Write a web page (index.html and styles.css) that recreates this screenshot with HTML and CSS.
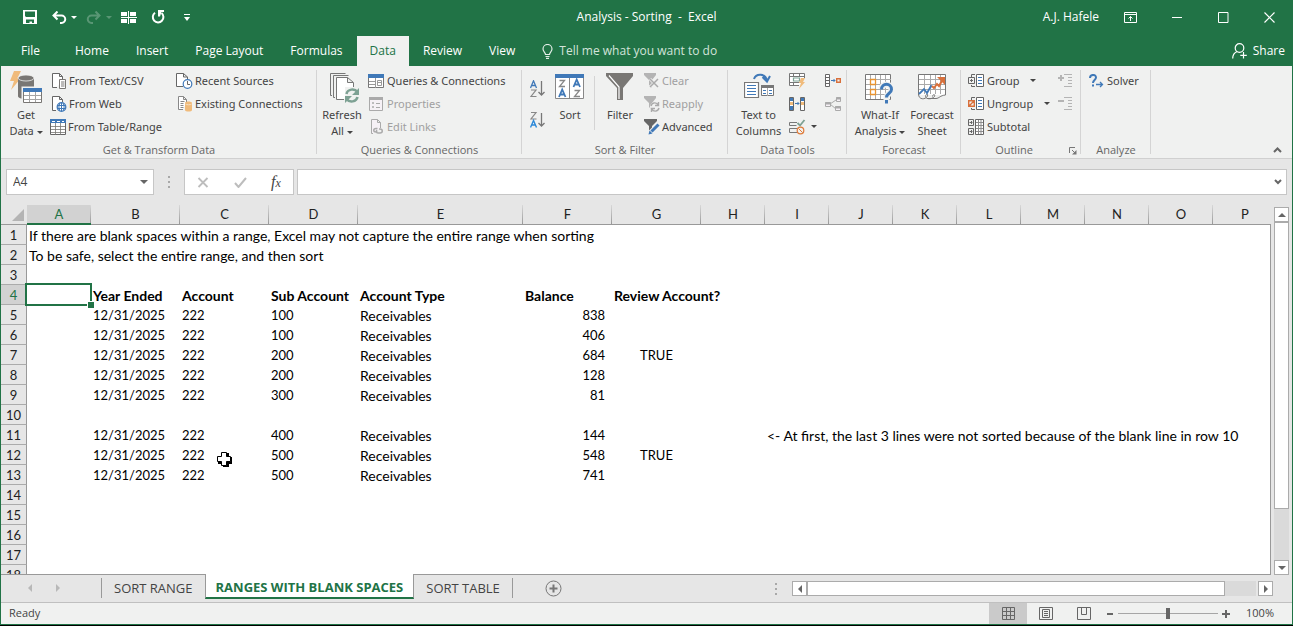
FILE: index.html
```html
<!DOCTYPE html>
<html lang="en">
<head>
<meta charset="utf-8">
<title>Analysis - Sorting - Excel</title>
<link rel="stylesheet" href="styles.css">
</head>
<body>
<div class="app">
  <header class="titlebar">
    <div class="quick">
      <button aria-label="Save"><svg width="14" height="14" viewBox="0 0 14 14"><path fill="#fff" fill-rule="evenodd" d="M0 0h14v14H0zM2 1.500h10V7H3L2 6zM3 9.500h8V13H9v-1.500H6.500V13H3z"/></svg></button>
      <button class="undo" aria-label="Undo"><svg width="15" height="13" viewBox="0 0 15 13"><path d="M5.500.5 1.500 4.500l4 4M2 4.500h7.500a3.500 3.500 0 0 1 0 7.500H8" fill="none" stroke="#fff" stroke-width="2"/></svg><i class="arrow"></i></button>
      <button class="redo" aria-label="Redo"><svg width="15" height="13" viewBox="0 0 15 13"><path d="m9.500.5 4 4-4 4M13 4.500H5.500a3.500 3.500 0 0 0 0 7.500H7" fill="none" stroke="#fff" stroke-width="2"/></svg><i class="arrow"></i></button>
      <button class="freeze" aria-label="Freeze panes"><svg width="16" height="13" viewBox="0 0 16 13"><path fill="#fff" d="M0 1h6v4H0zM9 1h6v4H9zM0 8h6v4H0zM9 8h6v4H9zM7 0h1v13H7zM0 6h16v1H0z"/></svg></button>
      <button class="repeat" aria-label="Repeat"><svg width="15" height="14" viewBox="0 0 15 14"><path d="M4 2.800A5.300 5.300 0 1 0 10.500 3" fill="none" stroke="#fff" stroke-width="2"/><path fill="#fff" d="M7 0h6v2h-2.500L9 6.500H7z"/></svg></button>
      <button class="custom" aria-label="Customize toolbar"><svg width="6" height="7" viewBox="0 0 6 7"><path fill="#fff" d="M0 0h6v1H0zM0 3h6L3 7z"/></svg></button>
    </div>
    <h1 class="title">Analysis - Sorting&nbsp; -&nbsp; Excel</h1>
    <div class="window">
      <span class="user">A.J. Hafele</span>
      <button aria-label="Ribbon display options"><svg width="13" height="11" viewBox="0 0 13 11" fill="none" stroke="#fff"><path d="M.5.500h12v10H.5zM.5 2.500h12M6.500 9V4.500M4.500 6.500l2-2 2 2"/></svg></button>
      <button aria-label="Minimize"><svg width="11" height="11" viewBox="0 0 11 11"><path d="M0 5.500h10" stroke="#fff"/></svg></button>
      <button aria-label="Maximize"><svg width="11" height="11" viewBox="0 0 11 11"><path d="M.5.500h9.500v10H.5z" fill="none" stroke="#fff"/></svg></button>
      <button aria-label="Close"><svg width="11" height="11" viewBox="0 0 11 11"><path d="m.5.500 10 10m0-10-10 10" stroke="#fff" stroke-width="1.200"/></svg></button>
    </div>
  </header>

  <nav class="tabs">
    <button class="file">File</button>
    <button>Home</button>
    <button>Insert</button>
    <button>Page Layout</button>
    <button>Formulas</button>
    <button class="current">Data</button>
    <button>Review</button>
    <button>View</button>
    <button class="tell"><svg width="11" height="15" viewBox="0 0 11 15" fill="none" stroke="#e4efe8" stroke-width="1.200"><path d="M3.500 10.500C3.500 8.500 1 7.500 1 5a4.500 4.500 0 0 1 9 0c0 2.500-2.500 3.500-2.500 5.500zM3.500 12.500h4M4 14.300h3"/></svg>Tell me what you want to do</button>
    <button class="share"><svg width="15" height="16" viewBox="0 0 15 16" fill="none" stroke="#fff" stroke-width="1.200"><circle cx="7.500" cy="5" r="4.300"/><path d="M.7 15.500c0-4 2-6 4.500-7M11.500 9v6.500M8.300 12.300h6.500"/></svg>Share</button>
  </nav>

  <section class="ribbon">
    <div class="group get">
      <div class="tools">
        <button class="big"><svg width="32" height="34" viewBox="0 0 32 34"><path fill="#f0bb7b" d="M4 1h7L7.500 8H11L1 20l3-9H0z"/><path fill="#797774" d="M8 8v18c0 2 3 3 8 3s8-1 8-3V8z"/><ellipse cx="16" cy="8" rx="8" ry="3" fill="#797774" stroke="#f0f1f0" stroke-width=".8"/><path fill="#f0f1f0" d="M11.500 16.500H32V34H11.500z"/><path fill="#fff" stroke="#797774" d="M13.500 18.500h18v14h-18z"/><path fill="#4079b8" d="M13 18h19v4H13z"/><path stroke="#a4a4a4" d="M14 25.500h17M14 29.500h17M19.500 22v10M25.500 22v10"/></svg><span>Get<br>Data <i class="arrow"></i></span></button>
        <div class="stack">
          <button><svg width="16" height="16" viewBox="0 0 16 16"><path fill="#fff" stroke="#666" d="M6 14.500H1.500v-14h7l3 3V6M8.500.500v3h3"/><path fill="#fff" stroke="#797774" d="M8.500 6.500h6v9h-6z"/><path stroke="#797774" d="M10 9h3.500M10 11h3.500M10 13h3.500"/></svg>From Text/CSV</button>
          <button><svg width="16" height="16" viewBox="0 0 16 16"><path fill="#fff" stroke="#666" d="M5 14.500H1.500v-14h7l3 3V6M8.500.500v3h3"/><circle cx="10.500" cy="11" r="4.300" fill="#fff" stroke="#4079b8" stroke-width="1.300"/><path fill="none" stroke="#4079b8" d="M6 9.500h9M6 12.500h9M10.500 7v8M9 7c-1.500 3-1.500 5 0 8M12 7c1.500 3 1.500 5 0 8"/></svg>From Web</button>
          <button class="outdent"><svg width="16" height="16" viewBox="0 0 16 16"><path fill="#fff" stroke="#666" d="M.5.500h15v15H.5z"/><path fill="#4079b8" d="M0 0h16v4H0z"/><path stroke="#fff" d="M2 2.500h3M7 2.500h3M12 2.500h2"/><path stroke="#797774" stroke-width=".8" d="M1 7.500h14M1 10.500h14M1 13.500h14M5.500 4v12M10.500 4v12"/></svg>From Table/Range</button>
        </div>
        <div class="stack">
          <button><svg width="17" height="16" viewBox="0 0 17 16"><path fill="#fff" stroke="#666" d="M7 13.500H.5V.500h7l4 3.500v3M7.500.500V4h4"/><circle cx="11.500" cy="11" r="4.300" fill="#fff" stroke="#4079b8" stroke-width="1.200"/><path fill="none" stroke="#666" d="M11.500 8v3.500H14"/></svg>Recent Sources</button>
          <button><svg width="17" height="16" viewBox="0 0 17 16"><path fill="#fff" stroke="#888" d="M7 13.500H2.500V.500h5l3 3V6M7.500.500v3h3M4.500 5.500h4M4.500 7.500h3M4.500 9.500h3M4.500 11.500h3"/><path fill="#f0bb7b" d="M9 7c0-2 7-2 7 0v7c0 2-7 2-7 0z"/><path fill="none" stroke="#f7dfc0" d="M9.500 8c1 1 5 1 6 0"/></svg>Existing Connections</button>
        </div>
      </div>
      <h2>Get &amp; Transform Data</h2>
    </div>

    <div class="group queries">
      <div class="tools">
        <button class="big"><svg width="32" height="34" viewBox="0 0 32 34" fill="none" stroke="#777"><path d="M4 25.500H2.500v-22h15M7 27.500H5.500v-22h15"/><path fill="#fff" d="M16 29.500H8.500v-22h11l6 5V18M19.500 7.500v5h5.500"/><path fill="#f0f1f0" stroke="none" d="M17 17h15v16H17z"/><path stroke="#7da193" stroke-width="2.500" d="M18.500 24c1-5 8-6 11-2M29.500 27c-1 5-8 6-11 2"/><path fill="#7da193" stroke="none" d="M31 18v7h-7zM17 33v-7h7z"/></svg><span>Refresh<br>All <i class="arrow"></i></span></button>
        <div class="stack">
          <button><svg width="16" height="16" viewBox="0 0 16 16"><path fill="#fff" stroke="#777" d="M.5 1.500h15v13H.5z"/><path fill="#4079b8" d="M0 1h16v4H0z"/><path stroke="#999" d="M1 8.500h6M1 11.500h6M7.500 5v10M9.500 7.500h4v5h-4zM10 9.500h3" fill="none"/></svg>Queries &amp; Connections</button>
          <button disabled><svg width="16" height="16" viewBox="0 0 16 16"><path fill="#f6f1f6" stroke="#aaa" d="M1.500 1.500h13v13h-13z"/><path fill="#aaa" d="M1 1h14v3H1zM8 7h4v1H8zM8 11h4v1H8z"/><path fill="none" stroke="#aaa" d="M4.500 6.500h1v1h-1zM4.500 10.500h1v1h-1z"/></svg>Properties</button>
          <button disabled><svg width="16" height="16" viewBox="0 0 16 16" fill="none" stroke="#aaa"><path fill="#f6f1f6" d="M5 14.500H3.500v-14h6l3 3V9M9.500.500v3h3"/><path stroke-width="1.500" d="M9.500 13H8c-3 0-3-3.500 0-3.500h1.500M11 10h1c3 0 3 4 0 4h-2c-2 0-2-2-1-3"/></svg>Edit Links</button>
        </div>
      </div>
      <h2>Queries &amp; Connections</h2>
    </div>

    <div class="group sort">
      <div class="tools">
        <div class="stack azs">
          <button aria-label="Sort A to Z"><svg width="16" height="18" viewBox="0 0 16 18" fill="none"><path stroke="#4079b8" stroke-width="1.300" d="M.5 8 3.500.800 6.500 8M1.500 5.500h4"/><path stroke="#888" stroke-width="1.200" d="M1 10h5L1 16.500h5.500"/><path stroke="#777" stroke-width="1.300" d="M11.500 1v13M8.500 12l3 3 3-3"/></svg></button>
          <button aria-label="Sort Z to A"><svg width="16" height="18" viewBox="0 0 16 18" fill="none"><path stroke="#888" stroke-width="1.200" d="M1 1.500h5L1 8h5.500"/><path stroke="#2b88d8" stroke-width="1.400" d="m.5 16.500 3-7 3 7M1.500 14h4"/><path stroke="#777" stroke-width="1.300" d="M11.500 2v13M8.500 12l3 3 3-3"/></svg></button>
        </div>
        <button class="big"><svg width="30" height="34" viewBox="0 0 30 34" fill="none"><path fill="#fff" stroke="#888" d="M.5 4.500h28v24H.5zM14.500 8v20"/><path fill="#4079b8" d="M0 4h29v4H0z"/><path stroke="#888" stroke-width="1.300" d="M4.500 10.500h5l-5 6h5.500M19.500 20.500h5l-5 6H25"/><path stroke="#4079b8" stroke-width="1.800" d="m4 27 3.200-7.500L10.500 27M5.500 24.500h4M18.500 17l3.200-7.500L25 17M20 14.500h4"/></svg><span>Sort</span></button>
        <i class="rule"></i>
        <button class="big filter"><svg width="28" height="34" viewBox="0 0 28 34"><path fill="#797774" d="M0 3h27v3L17 18v12h-6V18L0 6z"/><path d="m3 5.500 10 11.500v12" fill="none" stroke="#fff" stroke-width="1.200"/></svg><span>Filter</span></button>
        <div class="stack">
          <button disabled><svg width="16" height="16" viewBox="0 0 16 16"><path fill="#b4b4b4" d="M0 0h12v2L8 7v8l-3-3V7L0 2z"/><path d="m6 6 8 8m0-8-8 8" stroke="#f0f1f0" stroke-width="3"/><path d="m6 6 8 8m0-8-8 8" stroke="#aaa" stroke-width="1.500"/></svg>Clear</button>
          <button disabled><svg width="16" height="16" viewBox="0 0 16 16"><path fill="#b4b4b4" d="M0 0h12v2L8 7v7l-3-3V7L0 2z"/><circle cx="11" cy="11" r="5" fill="#f0f1f0"/><path d="M7 10c1-4 6-4 7-1M15 12c-1 4-6 4-7 1M14.500 6v3.500H11M7.500 16v-3.500H11" fill="none" stroke="#aaa" stroke-width="1.400"/></svg>Reapply</button>
          <button><svg width="16" height="16" viewBox="0 0 16 16"><path fill="#666" d="M0 0h13v2L8 7v7l-3-3V7L0 2z"/><path d="m6 14 8-8" stroke="#f0f1f0" stroke-width="5"/><path d="m7.500 12.500 7-7" stroke="#4079b8" stroke-width="3"/><path fill="#4079b8" d="m4.500 15.500 1-4 3 3z"/></svg>Advanced</button>
        </div>
      </div>
      <h2>Sort &amp; Filter</h2>
    </div>

    <div class="group data">
      <div class="tools">
        <button class="big"><svg width="30" height="34" viewBox="0 0 30 34" fill="none"><path fill="#fff" stroke="#777" stroke-width="1.200" d="M.5 12.500h14v15H.5z"/><path stroke="#4079b8" d="M3 15.500h9M3 18.500h9M3 21.500h9M3 24.500h9"/><path fill="#fff" stroke="#777" d="M17.500 15.500h12v10h-12z"/><path fill="#777" d="M17 15h13v3H17z"/><path stroke="#4079b8" d="M19 20.500h3M25 20.500h3M19 23.500h3M25 23.500h3"/><path stroke="#aaa" d="M23.500 18v8"/><path stroke="#4079b8" stroke-width="2" d="M10 9c2-6 12-6 13 2M18.500 7l4.500 4.500L26 6"/></svg><span>Text to<br>Columns</span></button>
        <div class="stack icons">
          <button aria-label="Flash fill"><svg width="17" height="16" viewBox="0 0 17 16" fill="none"><path fill="#fff" stroke="#777" d="M10 12.500H.5V.500h15V5M.5 3.500h15M.5 9.500h10M4.500 9v3M4.500.500v3M10.500.500v3"/><path stroke="#7da193" stroke-width="1.200" d="M4.500 5h6v3h-6z"/><path fill="#f0bb7b" d="M12 5h4l-2 4h2l-6 7 2-6h-2z"/></svg></button>
          <button aria-label="Remove duplicates"><svg width="17" height="14" viewBox="0 0 17 14"><path fill="#fff" stroke="#666" d="M.5.500h4v13h-4zM11.500.500h4v13h-4z"/><path fill="#4079b8" d="M1 1h3v3H1zM12 1h3v3h-3z"/><path fill="#f0bb7b" d="M1 5h3v3H1zM12 5h3v3h-3z"/><path fill="#4079b8" d="M1 9h3v4H1z"/><path d="M6 6.500h4M8.500 5l1.500 1.500L8.500 8" fill="none" stroke="#4079b8"/></svg></button>
          <button aria-label="Data validation"><svg width="17" height="16" viewBox="0 0 17 16" fill="none"><path stroke="#777" d="M8 3.500H.5v3h7M8 9.500H.5v4h8"/><path stroke="#7da193" stroke-width="1.800" d="m8.500 4 2.500 2.500L15.500 1"/><circle cx="11.500" cy="11.500" r="3.300" stroke="#e07b39" stroke-width="1.200"/><path stroke="#e07b39" d="m9.500 9.500 4 4"/></svg><i class="arrow"></i></button>
        </div>
        <div class="stack icons last">
          <button aria-label="Consolidate"><svg width="17" height="14" viewBox="0 0 17 14" fill="none"><path fill="#fff" stroke="#666" d="M.5.500h4v12h-4zM.5 3.500h4M.5 6.500h4M.5 9.500h4"/><path stroke="#4079b8" d="M6 6.500h4M8.500 5l1.500 1.500L8.500 8"/><path stroke="#d8703b" stroke-width="1.400" d="M11.700 4.700h3.600v3.600h-3.600z"/></svg></button>
          <button aria-label="Relationships" disabled><svg width="17" height="16" viewBox="0 0 17 16" fill="#f6f1f6" stroke="#aaa"><path fill="none" d="m5 8 6-4M5 8l6 5"/><path d="M.5 6.500h5v4h-5zM11.500 1.500h4v4h-4zM10.500 10.500h5v4h-5z"/><path stroke-width="2" d="M0 7.500h6M11 2.500h5M10 11.500h6"/></svg></button>
        </div>
      </div>
      <h2>Data Tools</h2>
    </div>

    <div class="group forecast">
      <div class="tools">
        <button class="big"><svg width="30" height="34" viewBox="0 0 30 34" fill="none"><path fill="#fff" stroke="#777" d="M.5 4.500h25v25H.5z"/><path stroke="#aaa" d="M1 9.500h25M1 14.500h25M1 19.500h25M1 24.500h25M5.500 5v24M10.500 5v24M15.500 5v24M20.500 5v24"/><path fill="#fff" stroke="#e8932f" stroke-width="1.300" d="M5.500 9.500h5v5h-5zM5.500 19.500h5v5h-5z"/><path stroke="#f0f1f0" stroke-width="6" d="M16.500 19c0-6 10-6 10 0s-5 4-5 9v5"/><path stroke="#4079b8" stroke-width="3" d="M16.500 19.500c0-7 10-7 10 0 0 4-5 3.500-5 8M21.500 30v3.500"/></svg><span>What-If<br>Analysis <i class="arrow"></i></span></button>
        <button class="big"><svg width="30" height="34" viewBox="0 0 30 34" fill="none"><path fill="#fff" stroke="#777" d="M1.500 25V4.500h27v20.500"/><path stroke="#aaa" d="M2 9.500h26M2 14.500h26M2 19.500h26M7.500 5v19M13.500 5v19M18.500 5v19M23.500 5v19"/><path stroke="#777" d="M1.500 24c0 6 7 6 9 2 1-3-2-2-2 .5s6 3.500 9 0c1-3-2-2-2 0M10 28.500h9c3 0 4-3 9.500-3.500"/><path stroke="#4079b8" stroke-width="1.800" d="m2 24 5-5 3 4 4-7 1 1"/><path stroke="#d8703b" stroke-width="2" d="m15 16 2 2 3-4 2 2 4-7"/><path fill="#d8703b" d="M20 7h8v8z"/></svg><span>Forecast<br>Sheet</span></button>
      </div>
      <h2>Forecast</h2>
    </div>

    <div class="group outline">
      <div class="tools">
        <div class="stack">
          <button><svg width="16" height="14" viewBox="0 0 16 14" fill="none" stroke="#666"><path d="M7 .5H3.500V3M7 12.500H3.500V11M.5 3.500h6v6h-6zM2 6.500h3M3.500 5v3"/><path fill="#fff" d="M8.500.500h7v12h-7z"/><path stroke="#4079b8" d="M10 3.500h4M10 6.500h4M10 9.500h4"/></svg><span class="wide">Group</span><i class="arrow"></i></button>
          <button><svg width="16" height="14" viewBox="0 0 16 14" fill="none" stroke="#666"><path d="M7 .5H3.500V3M7 12.500H3.500V11"/><path stroke="#d8703b" stroke-width="1.400" d="M.7 3.700h5.600v5.600H.7zM1 9l5-5"/><path fill="#fff" d="M8.500.500h7v12h-7z"/><path stroke="#4079b8" d="M10 3.500h4M10 6.500h4M10 9.500h4"/></svg><span class="wider">Ungroup</span><i class="arrow"></i></button>
          <button><svg width="16" height="16" viewBox="0 0 16 16" fill="none" stroke="#666"><path d="M.5.500h5v6h-5zM.5 9.500h5v6h-5zM1.500 3.500h3M3.500 2v3M1.500 12.500h3M3.500 11v3"/><path fill="#fff" d="M7.500.500h8v15h-8z"/><path stroke="#8d8d8d" d="M8 3.500h7M8 6.500h7M8 9.500h7M8 12.500h7M10.500 1v14M13 1v14"/></svg>Subtotal</button>
        </div>
        <div class="stack">
          <button aria-label="Show detail" disabled><svg width="15" height="14" viewBox="0 0 15 14" stroke="#b4b4b4"><path d="M6 .5h8M10 3.500h4M10 6.500h4M10 9.500h4M6 12.500h8"/><path stroke-width="2" d="M0 4h6M3 1v6"/></svg></button>
          <button aria-label="Hide detail" disabled><svg width="15" height="14" viewBox="0 0 15 14" stroke="#b4b4b4"><path d="M6 .5h8M10 3.500h4M10 6.500h4M10 9.500h4M6 12.500h8"/><path stroke-width="2" d="M0 4h6"/></svg></button>
        </div>
      </div>
      <h2>Outline</h2>
      <button class="launch" aria-label="Outline settings"><svg width="8" height="8" viewBox="0 0 8 8" fill="none" stroke="#777"><path d="M.5 6V.500H6M3 3l3 3"/><path fill="#777" stroke="none" d="M7.500 3v4.500H3z"/></svg></button>
    </div>

    <div class="group analyze">
      <div class="tools">
        <div class="stack">
          <button><svg width="15" height="14" viewBox="0 0 15 14" fill="none" stroke="#4079b8"><path stroke-width="2" d="M1 4c0-4 6-4 6-.5C7 6 4 6 4 9M4 10.500v2"/><path stroke-width="1.300" d="M7 10.500h6.500M11 8l2.500 2.500L11 13"/></svg>Solver</button>
        </div>
      </div>
      <h2>Analyze</h2>
    </div>
    <button class="collapse" aria-label="Collapse the ribbon"><svg width="9" height="6" viewBox="0 0 9 6"><path d="m1 5 3.500-3.500L8 5" fill="none" stroke="#666" stroke-width="2"/></svg></button>
  </section>

  <section class="formulabar">
    <div class="namebox"><input aria-label="Name box" value="A4"><i class="arrow"></i></div>
    <i class="dots"></i>
    <div class="fx">
      <button aria-label="Cancel"><svg width="12" height="11" viewBox="0 0 12 11"><path d="m1.500 1 9 9m0-9-9 9" stroke="#bdbdbd" stroke-width="1.800"/></svg></button>
      <button aria-label="Enter"><svg width="13" height="11" viewBox="0 0 13 11"><path d="m1 6 3.500 4L12 1" fill="none" stroke="#bdbdbd" stroke-width="2"/></svg></button>
      <button aria-label="Insert function"><em>f<small>x</small></em></button>
    </div>
    <div class="formula"><input aria-label="Formula"><svg width="8" height="6" viewBox="0 0 8 6"><path d="m1 1 3 3 3-3" fill="none" stroke="#666" stroke-width="2"/></svg></div>
  </section>

  <main class="workspace">
    <div class="grid">
      <table>
        <colgroup><col class="rowcol"><col class="narrow"><col class="mid"><col class="mid"><col class="mid"><col class="broad"><col class="mid"><col class="mid"><col class="narrow"><col class="narrow"><col class="narrow"><col class="narrow"><col class="narrow"><col class="narrow"><col class="narrow"><col class="narrow"><col></colgroup>
        <thead><tr><th class="corner"><svg width="12" height="12" viewBox="0 0 12 12"><path fill="#b4b4b4" d="M12 0v12H0z"/></svg></th><th class="on">A</th><th>B</th><th>C</th><th>D</th><th>E</th><th>F</th><th>G</th><th>H</th><th>I</th><th>J</th><th>K</th><th>L</th><th>M</th><th>N</th><th>O</th><th class="last">P</th></tr></thead>
        <tbody>
          <tr><th>1</th><td>If there are blank spaces within a range, Excel may not capture the entire range when sorting</td></tr>
          <tr><th>2</th><td>To be safe, select the entire range, and then sort</td></tr>
          <tr><th>3</th></tr>
          <tr class="bold"><th class="on">4</th><td class="selected"></td><td>Year Ended</td><td>Account</td><td>Sub Account</td><td>Account Type</td><td>Balance</td><td>Review Account?</td></tr>
          <tr><th>5</th><td></td><td class="fig">12/31/2025</td><td class="fig">222</td><td class="fig">100</td><td>Receivables</td><td class="fig num">838</td></tr>
          <tr><th>6</th><td></td><td class="fig">12/31/2025</td><td class="fig">222</td><td class="fig">100</td><td>Receivables</td><td class="fig num">406</td></tr>
          <tr><th>7</th><td></td><td class="fig">12/31/2025</td><td class="fig">222</td><td class="fig">200</td><td>Receivables</td><td class="fig num">684</td><td class="fig flag">TRUE</td></tr>
          <tr><th>8</th><td></td><td class="fig">12/31/2025</td><td class="fig">222</td><td class="fig">200</td><td>Receivables</td><td class="fig num">128</td></tr>
          <tr><th>9</th><td></td><td class="fig">12/31/2025</td><td class="fig">222</td><td class="fig">300</td><td>Receivables</td><td class="fig num">81</td></tr>
          <tr><th>10</th></tr>
          <tr><th>11</th><td></td><td class="fig">12/31/2025</td><td class="fig">222</td><td class="fig">400</td><td>Receivables</td><td class="fig num">144</td><td></td><td></td><td>&lt;- At first, the last 3 lines were not sorted because of the blank line in row 10</td></tr>
          <tr><th>12</th><td></td><td class="fig">12/31/2025</td><td class="fig hover">222<svg class="cursor" width="15" height="15" viewBox="0 0 15 15"><path fill="#000" d="M5 1h7v4h3v7h-3v3H6v-3H1V6h4z"/><path fill="#fff" stroke="#000" d="M4.500.500h5v4h4v5h-4v4h-5v-4h-4v-5h4z"/></svg></td><td class="fig">500</td><td>Receivables</td><td class="fig num">548</td><td class="fig flag">TRUE</td></tr>
          <tr><th>13</th><td></td><td class="fig">12/31/2025</td><td class="fig">222</td><td class="fig">500</td><td>Receivables</td><td class="fig num">741</td></tr>
          <tr><th>14</th></tr>
          <tr><th>15</th></tr>
          <tr><th>16</th></tr>
          <tr><th>17</th></tr>
          <tr><th>18</th></tr>
        </tbody>
      </table>
    </div>
    <div class="vscroll">
      <button aria-label="Scroll up"><i class="arrow up"></i></button>
      <i class="thumb"></i>
      <i class="track"></i>
      <button aria-label="Scroll down"><i class="arrow"></i></button>
    </div>
  </main>

  <footer class="sheets">
    <div class="steps"><i class="arrow left"></i><i class="arrow right"></i></div>
    <button class="sheet first">SORT RANGE</button>
    <button class="sheet active">RANGES WITH BLANK SPACES</button>
    <button class="sheet final">SORT TABLE</button>
    <button class="add" aria-label="New sheet"><svg width="17" height="17" viewBox="0 0 17 17" fill="none" stroke="#777"><circle cx="8.500" cy="8.500" r="7.500"/><path stroke-width="2" d="M8.500 4.500v8M4.500 8.500h8"/></svg></button>
    <i class="dots"></i>
    <div class="hscroll">
      <button aria-label="Scroll left"><i class="arrow left"></i></button>
      <i class="thumb"></i>
      <i class="track"></i>
      <button aria-label="Scroll right"><i class="arrow right"></i></button>
    </div>
  </footer>

  <footer class="status">
    <span>Ready</span>
    <div class="views">
      <button class="chosen" aria-label="Normal view"><svg width="13" height="13" viewBox="0 0 13 13"><path d="M.5.500h12v12H.5zM4.500 0v13M8.500 0v13M0 4.500h13M0 8.500h13" fill="none" stroke="#666"/></svg></button>
      <button aria-label="Page layout view"><svg width="14" height="13" viewBox="0 0 14 13"><path d="M.5.500h13v12H.5zM3.500 2.500h7v8h-7zM5 4.500h4M5 6.500h4M5 8.500h4" fill="none" stroke="#666"/></svg></button>
      <button aria-label="Page break view"><svg width="14" height="13" viewBox="0 0 14 13"><path d="M.5.500h13v12H.5zM4.500 1v6.500h5V1" fill="none" stroke="#666"/></svg></button>
    </div>
    <div class="zoom">
      <button aria-label="Zoom out"><svg width="7" height="8" viewBox="0 0 7 8"><path d="M0 4h6" stroke="#666" stroke-width="2"/></svg></button>
      <input type="range" aria-label="Zoom" min="0" max="100" value="50">
      <button aria-label="Zoom in"><svg width="8" height="8" viewBox="0 0 8 8"><path d="M0 4h8M4 0v8" stroke="#666" stroke-width="2"/></svg></button>
      <span>100%</span>
    </div>
  </footer>
</div>
</body>
</html>
```
FILE: styles.css
```css
* { box-sizing: border-box; }
body {
  margin: 0;
  font: 11px/16px "Open Sans", "Noto Sans", sans-serif;
  color: #444;
  background: #000;
}
button, input { font: inherit; color: inherit; }
button { border: 0; padding: 0; background: none; display: flex; align-items: center; white-space: nowrap; }
svg { display: block; flex: none; }
h1, h2 { margin: 0; font-size: 11px; font-weight: 400; }

.app {
  height: calc(100vh - 1px);
  display: flex;
  flex-direction: column;
  background: #e6e6e6;
  border: 1px solid #217346;
  border-width: 0 1px 1px;
  overflow: hidden;
}

.arrow {
  display: inline-block;
  flex: none;
  border: 3px solid transparent;
  border-top-color: currentColor;
  border-bottom-width: 0;
}
.arrow.left { border-width: 4px 4px 4px 0; border-color: transparent currentColor; }
.arrow.right { border-width: 4px 0 4px 4px; border-color: transparent currentColor; }

.titlebar {
  height: 36px;
  flex: none;
  display: grid;
  grid-template-columns: 1fr auto 1fr;
  align-items: center;
  padding-bottom: 2px;
  background: #217346;
  color: #fff;
}
.quick { display: flex; align-items: center; padding-left: 22px; }
.quick .undo { margin-left: 15px; gap: 4px; }
.quick .redo { margin-left: 9px; gap: 5px; opacity: .25; }
.quick .freeze { margin-left: 9px; }
.quick .repeat { margin-left: 14px; }
.quick .custom { margin-left: 18px; }
.title { font-size: 12px; }
.window { display: flex; align-items: center; justify-content: flex-end; gap: 35px; padding-right: 17px; }
.user { font-size: 12px; margin-right: -10px; }

.tabs {
  height: 30px;
  flex: none;
  display: flex;
  padding-left: 7px;
  background: #217346;
  color: #fff;
  font-size: 12px;
}
.tabs button { padding: 0 13px; margin-right: 1px; }
.tabs .file { margin-right: 9px; }
.tabs .current { background: #f0f1f0; color: #217346; }
.tabs .tell { gap: 6px; color: #d3e3da; }
.tabs .share { margin: 0 7px 0 auto; padding: 0; gap: 6px; }

.ribbon {
  height: 93px;
  flex: none;
  display: flex;
  background: #f0f1f0;
  border-bottom: 1px solid #d0d0d0;
}
.group {
  position: relative;
  display: flex;
  flex-direction: column;
  justify-content: space-between;
  padding: 3px 0 1px;
}
.group::after {
  content: "";
  position: absolute;
  right: 0;
  top: 4px;
  bottom: 4px;
  width: 1px;
  background: #d4d4d4;
}
.group h2 { text-align: center; line-height: 14px; color: #666; }
.tools { display: flex; align-items: flex-start; font-family: "Noto Sans", "Open Sans", sans-serif; }
.tools > * { flex: none; }
.big { flex-direction: column; padding-top: 1px; text-align: center; }
.big svg { margin-bottom: 3px; }
.big .arrow { vertical-align: middle; }
.stack { display: grid; grid-auto-rows: 23px; }
.stack button { gap: 2px; }
button:disabled { color: #a0a0a0; }

.get { width: 316px; }
.get .big { width: 50px; }
.get .stack { width: 125px; }
.get .outdent svg { margin-left: -1px; }
.queries { width: 205px; }
.queries .big { width: 50px; margin-right: 1px; }
.queries .big svg { margin-left: 4px; }
.queries .big + .stack button { gap: 3px; }
.sort { width: 206px; }
.sort .azs { grid-auto-rows: 31px; padding: 4px 0 0 8px; }
.sort .big { width: 48px; }
.sort .rule { width: 1px; height: 54px; margin-top: 7px; background: #d4d4d4; }
.sort .filter { margin-left: 1px; }
.data { width: 119px; }
.data .big { width: 61px; }
.data .icons { width: 36px; }
.data .last { width: 20px; }
.data .icons button { gap: 5px; }
.forecast { width: 114px; }
.forecast .big { width: 58px; margin-left: 4px; }
.forecast .big + .big { width: 46px; margin-left: 0; }
.outline { width: 120px; }
.outline .stack { padding-left: 7px; width: 97px; }
.outline .stack + .stack { padding: 0; width: 16px; }
.outline .stack button { gap: 3px; }
.outline .wide { width: 40px; text-align: left; }
.outline .wider { width: 54px; text-align: left; }
.outline h2 { padding-right: 14px; }
.launch { position: absolute; right: 4px; bottom: 3px; }
.analyze { width: 70px; }
.analyze .stack { padding-left: 8px; }
.analyze .stack button { gap: 3px; }
.collapse { margin: auto 10px 5px auto; }

.formulabar {
  flex: none;
  height: 46px;
  display: flex;
  padding: 10px 5px;
}
.formulabar > div { display: flex; align-items: center; background: #fff; border: 1px solid #c6c6c6; }
.formulabar input { border: 0; outline: 0; background: none; flex: 1; min-width: 0; padding: 0 6px; font-size: 12px; }
.namebox { width: 148px; padding-right: 5px; }
.namebox .arrow, .vscroll .arrow { border-width: 4px 4px 0; color: #666; }
.vscroll .arrow.up { border-width: 0 4px 4px; border-color: transparent transparent currentColor; }
.dots { width: 2px; height: 12px; margin: 7px 14px; background: repeating-linear-gradient(#a8a8a8 0 2px, transparent 2px 5px); }
.fx { width: 110px; justify-content: space-around; margin-right: 3px; }
.fx em { font: italic 16px/16px "Liberation Serif", serif; }
.fx small { font-size: 12px; }
.formula { flex: 1; padding-right: 4px; }

.workspace { flex: 1; min-height: 0; display: flex; }
.grid {
  position: relative;
  flex: 1;
  min-width: 0;
  overflow: hidden;
  background: #fff;
  border-bottom: 1px solid #999;
}
.grid::after { content: ""; position: absolute; top: 19px; right: 0; bottom: 0; width: 1px; background: #999; }
table {
  width: 100%;
  table-layout: fixed;
  border-collapse: separate;
  border-spacing: 0;
  font: 13px/19px Lato, "Open Sans", sans-serif;
  color: #000;
}
.rowcol { width: 26px; }
.narrow { width: 64px; }
.mid { width: 89px; }
.broad { width: 165px; }
tr { height: 20px; }
th { padding: 0; font-weight: 400; background: #e6e6e6; border-bottom: 1px solid #ababab; color: #222; }
thead th { border-color: #999; background: linear-gradient(#d8d8d8, #999) right / 1px 100% no-repeat #e6e6e6; }
thead .last { background: #e6e6e6; padding-left: 6px; }
thead .corner { background: #e6e6e6; }
.corner svg { margin-left: 11px; }
tbody th { border-right: 1px solid #999; padding-top: 1px; line-height: 18px; }
th.on { background-color: #d2d2d2; color: #217346; }
thead th.on { border-bottom: 2px solid #217346; line-height: 18px; }
td { padding: 1px 0 0 2px; white-space: nowrap; font-size: 14px; }
.bold td { font-weight: 700; }
td.fig { font-size: 13px; }
td.num { padding-right: 7px; text-align: right; }
td.flag { padding-left: 0; text-align: center; }
.hover { position: relative; }
.cursor { position: absolute; left: 37px; top: 7px; }
.selected { position: relative; }
.selected::before { content: ""; position: absolute; inset: -2px -1px -1px -2px; border: 2px solid #217346; }
.selected::after { content: ""; position: absolute; right: -3px; bottom: -3px; width: 6px; height: 6px; background: #217346; border: 1px solid #fff; border-width: 1px 0 0 1px; }

.vscroll { display: flex; flex-direction: column; width: 15px; margin: 2px 3px 0; }
.vscroll button, .hscroll button {
  flex: none;
  width: 15px;
  height: 15px;
  justify-content: center;
  background: #fff;
  border: 1px solid #ababab;
  color: #666;
}
.thumb { background: #fff; border: 1px solid #ababab; }
.track { background: #dadada; }
.vscroll .thumb { flex: 287; }
.vscroll .track { flex: 51; }

.sheets { flex: none; height: 28px; display: flex; align-items: center; border-bottom: 1px solid #c0c0c0; }
.steps { width: 100px; padding: 0 0 2px 27px; display: flex; gap: 24px; color: #b8b8b8; }
.sheet { height: 20px; margin-bottom: 2px; font-size: 13px; padding: 0 12px; }
.sheet.first { border-left: 1px solid #999; }
.sheet.final { border-right: 1px solid #999; }
.sheet.active {
  position: relative;
  align-self: flex-start;
  height: 25px;
  margin-top: -1px;
  padding: 2px 10px 0;
  background: #fff;
  border: 1px solid #999;
  border-width: 0 1px 2px;
  border-bottom-color: #217346;
  color: #217346;
  font-weight: 700;
}
.add { margin-left: 32px; }
.sheets .dots { margin: 0 15px 0 auto; }
.hscroll { width: 481px; display: flex; height: 15px; margin-right: 19px; }
.hscroll .thumb { flex: 419; }
.hscroll .track { flex: 31; margin-right: 2px; }

.status { flex: none; height: 21px; display: flex; align-items: center; padding-left: 8px; background: #f0f1f0; }
.status span { padding-bottom: 2px; }
.views { display: flex; height: 100%; margin-left: auto; }
.views button { width: 38px; justify-content: center; }
.views .chosen { background: #cacaca; }
.zoom { display: flex; align-items: center; gap: 4px; margin: 0 18px 0 4px; }
.zoom span { margin-left: 12px; }
.zoom input { appearance: none; width: 100px; height: 12px; margin: 0; background: linear-gradient(#a6a6a6, #a6a6a6) center / 100% 1px no-repeat; }
.zoom input::-webkit-slider-thumb { appearance: none; width: 4px; height: 11px; background: #666; }
```
